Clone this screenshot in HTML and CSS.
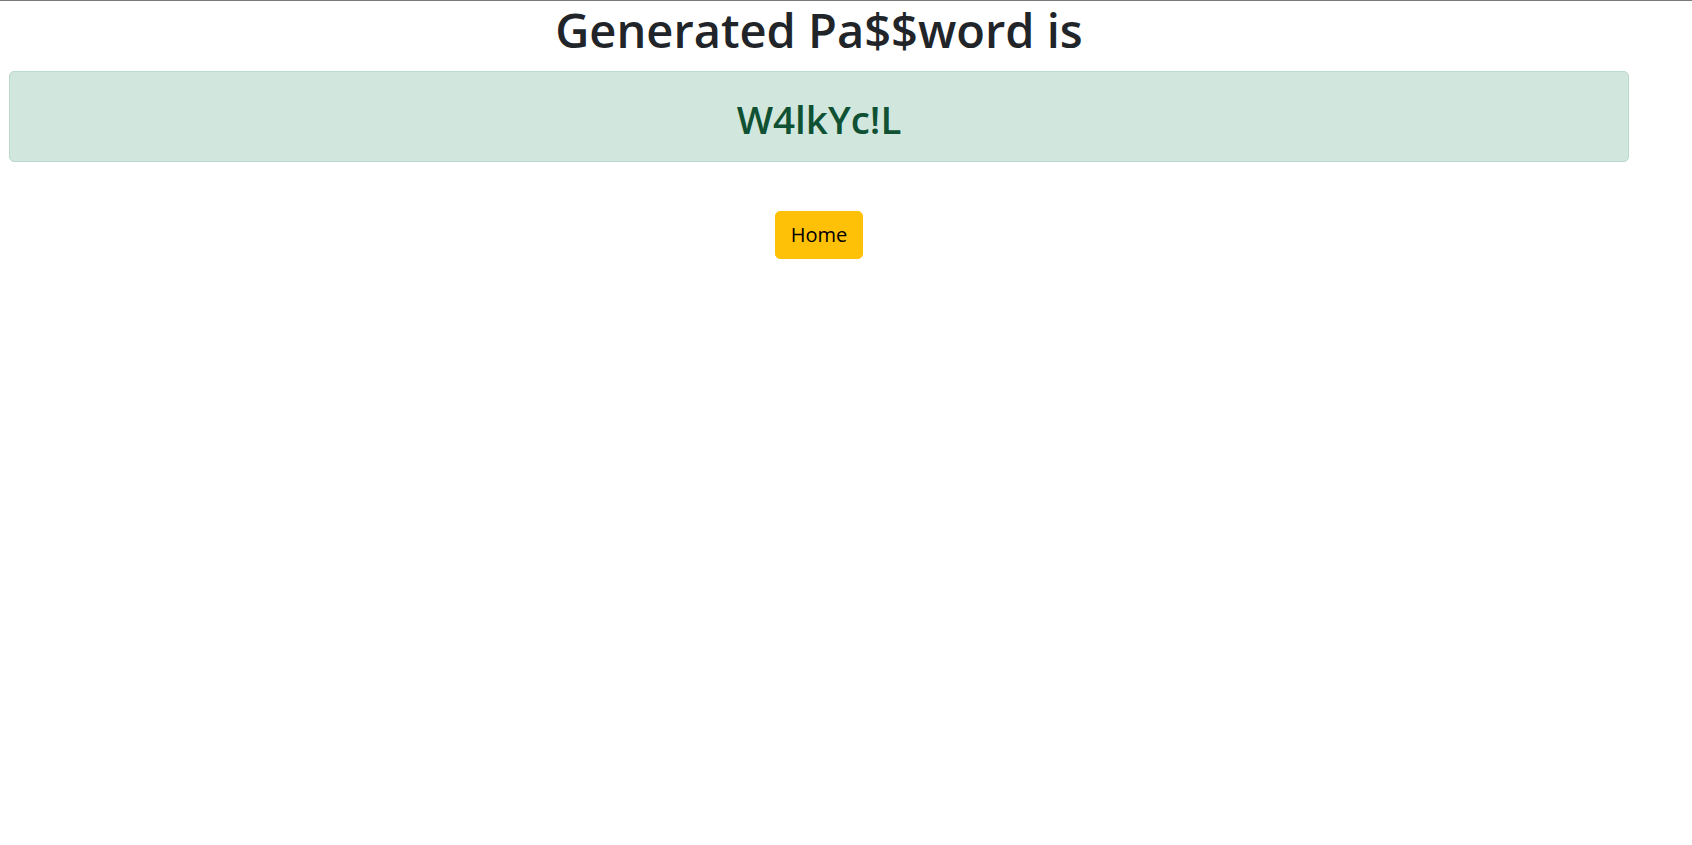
FILE: index.html
```html
<!DOCTYPE html>
<html lang="en">
<head>
<meta charset="utf-8">
<title>Generated Password</title>
<link rel="stylesheet" href="styles.css">
</head>
<body>
<div class="topline"></div>
<main class="container">
  <h1 class="title">Generated Pa$$word is</h1>
  <div class="alert">
    <h2 class="password">W4lkYc!L</h2>
  </div>
  <div class="actions">
    <a class="btn" href="#">Home</a>
  </div>
</main>
</body>
</html>
```
FILE: styles.css
```css
html, body {
  margin: 0;
  padding: 0;
  background: #ffffff;
}
body {
  font-family: "Open Sans", "Noto Sans", sans-serif;
  color: #212529;
}
.topline {
  height: 1px;
  background: #7b7b7b;
}
.container {
  width: 1620px;
  margin-left: 9px;
  display: flex;
  flex-direction: column;
  align-items: stretch;
}
.title {
  margin: 0;
  text-align: center;
  font-size: 47px;
  font-weight: 600;
  line-height: 58px;
  color: #212529;
}
.alert {
  margin-top: 12px;
  height: 89px;
  border: 1px solid #badbcc;
  border-radius: 5px;
  background: #d1e7dd;
  display: flex;
  align-items: center;
  justify-content: center;
}
.password {
  margin: 0;
  padding-top: 4px;
  font-size: 38.5px;
  font-weight: 600;
  line-height: 48px;
  color: #0f5132;
}
.actions {
  display: flex;
  justify-content: center;
  margin-top: 49px;
}
.btn {
  display: inline-block;
  background: #ffc107;
  color: #000;
  text-decoration: none;
  font-size: 20px;
  line-height: 30px;
  padding: 8px 15px;
  border: 1px solid #ffc107;
  border-radius: 5px;
}
```
